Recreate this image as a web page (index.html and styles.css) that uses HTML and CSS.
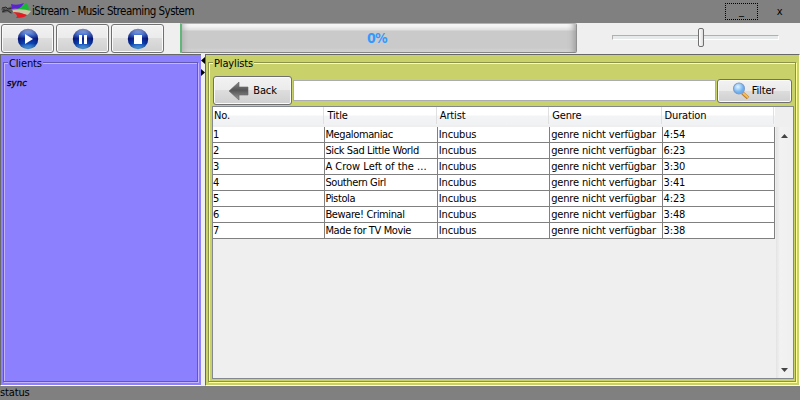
FILE: index.html
```html
<!DOCTYPE html>
<html lang="en">
<head>
<meta charset="utf-8">
<title>iStream - Music Streaming System</title>
<link rel="stylesheet" href="styles.css">
</head>
<body>
<svg class="defs" width="0" height="0">
  <defs>
    <linearGradient id="orb" x1="0" y1="0" x2="0" y2="1"><stop offset="0" stop-color="#b9d0f4"/><stop offset=".28" stop-color="#4a74d2"/><stop offset=".48" stop-color="#0a1f86"/><stop offset=".72" stop-color="#0a46b8"/><stop offset="1" stop-color="#7adcff"/></linearGradient>
    <radialGradient id="rim"><stop offset=".6" stop-color="#000050" stop-opacity="0"/><stop offset="1" stop-color="#000050" stop-opacity=".4"/></radialGradient>
    <linearGradient id="arrow" x1="0" y1="0" x2="0" y2="1"><stop offset="0" stop-color="#888"/><stop offset=".45" stop-color="#555"/><stop offset="1" stop-color="#999"/></linearGradient>
    <radialGradient id="lens" cx=".4" cy=".35"><stop offset="0" stop-color="#e4f4ff"/><stop offset="1" stop-color="#6bb0f0"/></radialGradient>
  </defs>
</svg>
<div class="window">
  <header class="titlebar">
    <svg class="logo" width="31" height="22" viewBox="0 0 31 22">
      <path d="M11 4Q17 6 24 3L20 9Q14 8 12 9Z" fill="#5b22d5"/>
      <path d="M13 10Q20 9 26 3Q29 5 29 11Q20 9 13 10Z" fill="#16b936"/>
      <path d="M12 10Q22 8 31 11Q29 14 27 15Q20 12 12 12Z" fill="#c9c8a5"/>
      <path d="M13 12Q20 12 27 15Q25 18 16 18Q19 15 13 12Z" fill="#e51b22"/>
      <path d="M1 9L3 7L7 8L12 6L11 9L13 11L12 14L8 12L3 13Z" fill="#5b5b5b"/>
      <path d="M2 8L6 7L8 9L12 8M2 12L7 10L11 13M4 9V11" stroke="#292929" fill="none"/>
    </svg>
    <span class="app-title">iStream - Music Streaming System</span>
    <span class="minimize">_</span>
    <span class="close">x</span>
  </header>
  <div class="toolbar">
    <button class="btn media"><svg width="22" height="22" viewBox="0 0 22 22"><circle cx="11" cy="11" r="10.2" fill="url(#orb)"/><circle cx="11" cy="11" r="10.2" fill="url(#rim)"/><path d="M8 6L16 11L8 16Z" fill="#fff"/></svg></button>
    <button class="btn media"><svg width="22" height="22" viewBox="0 0 22 22"><circle cx="11" cy="11" r="10.2" fill="url(#orb)"/><circle cx="11" cy="11" r="10.2" fill="url(#rim)"/><path d="M7 7h3v9H7zM12 7h3v9h-3z" fill="#fff"/></svg></button>
    <button class="btn media"><svg width="22" height="22" viewBox="0 0 22 22"><circle cx="11" cy="11" r="10.2" fill="url(#orb)"/><circle cx="11" cy="11" r="10.2" fill="url(#rim)"/><path d="M7 7h8v9H7z" fill="#fff"/></svg></button>
    <div class="progress">0%</div>
    <div class="slider"><div class="thumb"></div></div>
  </div>
  <main class="split">
    <section class="panel clients">
      <div class="group"><span class="legend">Clients</span><div class="client">sync</div></div>
    </section>
    <svg class="divider" width="4" height="332" viewBox="0 0 4 332"><path d="M4 3v7L0 6.500ZM0 15v7L4 18.500Z"/></svg>
    <section class="panel playlists">
      <div class="group">
        <span class="legend">Playlists</span>
        <div class="search">
          <button class="btn back"><svg width="22" height="20" viewBox="0 0 22 20"><path d="M1 10L11 1V6H20V14H11V19Z" fill="url(#arrow)" stroke="#666" stroke-width=".6"/></svg><span>Back</span></button>
          <div class="field"></div>
          <button class="btn filter"><svg width="18" height="18" viewBox="0 0 18 18"><path d="M10.500 11L16 16" stroke="#b87a32" stroke-width="3.600"/><path d="M11 11L16 15.500" stroke="#f8c050" stroke-width="2"/><circle cx="7" cy="6.500" r="5.500" fill="url(#lens)" stroke="#7f9cca" stroke-width="1.100"/></svg><span>Filter</span></button>
        </div>
        <div class="scroll">
          <table>
            <thead><tr><th>No.</th><th>Title</th><th>Artist</th><th>Genre</th><th>Duration</th></tr></thead>
            <tbody>
              <tr><td>1</td><td>Megalomaniac</td><td>Incubus</td><td>genre nicht verfügbar</td><td>4:54</td></tr>
              <tr><td>2</td><td>Sick Sad Little World</td><td>Incubus</td><td>genre nicht verfügbar</td><td>6:23</td></tr>
              <tr><td>3</td><td class="cut">A Crow Left of the ...</td><td>Incubus</td><td>genre nicht verfügbar</td><td>3:30</td></tr>
              <tr><td>4</td><td>Southern Girl</td><td>Incubus</td><td>genre nicht verfügbar</td><td>3:41</td></tr>
              <tr><td>5</td><td>Pistola</td><td>Incubus</td><td>genre nicht verfügbar</td><td>4:23</td></tr>
              <tr><td>6</td><td>Beware! Criminal</td><td>Incubus</td><td>genre nicht verfügbar</td><td>3:48</td></tr>
              <tr><td>7</td><td>Made for TV Movie</td><td>Incubus</td><td>genre nicht verfügbar</td><td>3:38</td></tr>
            </tbody>
          </table>
          <div class="scrollbar">
            <svg width="7" height="4" viewBox="0 0 7 4"><path d="M3.500 0L7 4H0Z" fill="#444"/></svg>
            <svg width="7" height="4" viewBox="0 0 7 4"><path d="M0 0H7L3.500 4Z" fill="#444"/></svg>
          </div>
        </div>
      </div>
    </section>
  </main>
  <footer class="status">status</footer>
</div>
</body>
</html>
```

FILE: styles.css
```css
* { box-sizing: border-box; }
body { margin: 0; }
.defs { position: absolute; }
.window {
  width: 800px; height: 400px; overflow: hidden;
  display: flex; flex-direction: column;
  background: #efefef; color: #000;
  font: 11px/14px "DejaVu Sans Condensed", "DejaVu Sans", sans-serif;
  font-stretch: condensed; letter-spacing: -.15px;
  white-space: nowrap;
}
svg { display: block; flex: none; }
.titlebar { height: 23px; flex: none; display: flex; background: #808080; }
.app-title { width: 694px; padding: 4px 0 0 1px; font-size: 11.5px; letter-spacing: -.52px; }
.minimize { width: 33px; height: 17px; margin-top: 3px; border: 1px dotted #000; text-align: center; line-height: 13px; }
.close { width: 42px; padding: 5px 0 0 1px; text-align: center; }
.toolbar { height: 31px; flex: none; display: flex; padding: 1px 0 0 1px; gap: 2px; }
.btn {
  display: flex; align-items: center; justify-content: center; flex: none;
  padding: 0; border: 1px solid #707070; border-radius: 3px; color: #000;
  font: inherit; letter-spacing: inherit;
  background: linear-gradient(#f2f2f2, #ebebeb 49%, #dddddd 50%, #cfcfcf);
  box-shadow: inset 0 0 0 1px #fafafa;
}
.media { width: 53px; height: 29px; }
.progress {
  width: 397px; height: 30px; margin: -1px 0 0 14px; padding-right: 4px;
  border: 1px solid #b2b2b2; border-left: 2px solid #62b578; border-right-color: #909090; border-bottom-color: #858585;
  border-radius: 0 2px 2px 0;
  background: linear-gradient(#fff, #e0e0e0 6px, #cacaca 7px, #cacaca 24px, #d8d8d8);
  box-shadow: inset -7px 0 6px -5px #999, inset 6px 0 6px -5px #aaa;
  color: #3399ff; font: bold 14px/28px "DejaVu Sans Condensed", "DejaVu Sans", sans-serif;
  font-stretch: condensed; letter-spacing: -.6px; text-align: center;
}
.slider { width: 167px; height: 5px; margin: 11px 0 0 33px; border: 1px solid; border-color: #b0b0b0 #fff #fff #b0b0b0; background: #e7eaea; }
.thumb { width: 6px; height: 19px; margin: -8px 0 0 85px; border: 1px solid #707070; border-radius: 2px; background: linear-gradient(90deg, #fff, #ddd); }
.split { height: 332px; flex: none; display: flex; }
.panel { border: 1px solid #686868; border-right: 0; border-bottom: 1px solid #fff; padding: 7px 3px 3px 2px; }
.clients { width: 201px; background: #8c80ff; --dark: #6259b2; --light: #c4b3ff; }
.playlists { width: 595px; background: #c9d16b; border-right: 1px solid #fff; --dark: #8d924b; --light: #ffff96; }
.divider { background: #efefef; }
.group { height: 320px; border: 1px solid var(--dark); box-shadow: inset 1px 1px var(--light), 1px 1px var(--light); }
.legend { display: block; width: max-content; height: 14px; margin: -6px 0 0 4px; padding: 0 1px; background: #8c80ff; }
.playlists .legend { background: #c9d16b; }
.client { margin: 6px 0 0 3px; font: italic 9.5px/12px "DejaVu Sans Condensed", "DejaVu Sans", sans-serif; font-stretch: condensed; -webkit-text-stroke: .3px #000; letter-spacing: .1px; }
.search { height: 29px; margin: 5px 3px 0 4px; display: flex; align-items: center; gap: 1px; }
.back { width: 79px; height: 29px; gap: 3px; }
.field { width: 423px; height: 21px; border: 1px solid #abadb3; background: #fff; }
.filter { width: 75px; height: 24px; gap: 2px; padding-right: 2px; }
.scroll { width: 582px; height: 273px; margin: 1px 0 0 3px; border: 1px solid #828790; background: #efefef; display: flex; }
table { width: 562px; height: max-content; flex: none; table-layout: fixed; border-collapse: separate; border-spacing: 0; }
th { height: 20px; padding: 0 0 3px 1px; font-weight: normal; text-align: left; background: linear-gradient(90deg, transparent calc(100% - 2px), #e0e0e0 calc(100% - 2px), #e0e0e0 calc(100% - 1px), transparent calc(100% - 1px)) 0 0 / 100% 17px no-repeat, linear-gradient(#fff 8px, #f3f4f6 9px, #f1f2f4 18px, #efefef 18px); }
th + th { padding-left: 2px; }
td { height: 16px; padding: 0; line-height: 14px; border: solid #808080; border-width: 0 1px 1px 0; background: #fff; overflow: hidden; }
td:nth-child(2) { letter-spacing: -.38px; }
td.cut { letter-spacing: 0; }
td:nth-child(n+3) { padding-left: 1px; }
.scrollbar { width: 17px; display: flex; flex-direction: column; justify-content: space-between; align-items: center; padding: 7px 0 6px; margin: 20px 0 0 1px; background: linear-gradient(90deg, #e3e3e3, #f2f2f2 4px, #efefef); }
.status { height: 14px; flex: none; background: #808080; }
```
